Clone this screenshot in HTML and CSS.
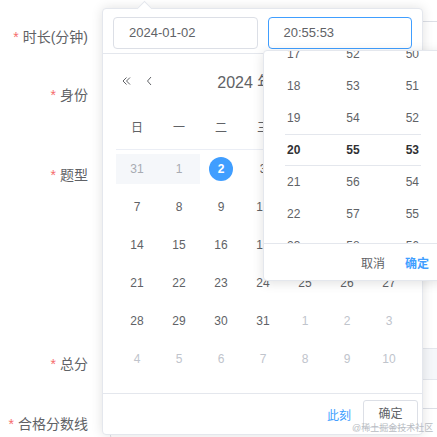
FILE: index.html
```html
<!DOCTYPE html>
<html lang="zh-CN">
<head>
<meta charset="utf-8">
<title>日期时间选择</title>
<link rel="stylesheet" href="styles.css">
</head>
<body>
<div class="page">
  <form class="form">
    <div class="item item-a">
      <label class="label"><span class="req">*</span>时长(分钟)</label>
      <div class="field"></div>
    </div>
    <div class="item item-b">
      <label class="label"><span class="req">*</span>身份</label>
      <div class="field"></div>
    </div>
    <div class="item item-c">
      <label class="label"><span class="req">*</span>题型</label>
      <div class="field"></div>
    </div>
    <div class="item item-d">
      <label class="label"><span class="req">*</span>总分</label>
      <div class="field field-disabled"></div>
    </div>
    <div class="item item-e">
      <label class="label"><span class="req">*</span>合格分数线</label>
      <div class="field"></div>
    </div>
  </form>

  <div class="picker">
    <div class="picker-arrow"></div>
    <div class="picker-head">
      <div class="editor">2024-01-02</div>
      <div class="editor editor-focus">20:55:53</div>
    </div>
    <div class="nav">
      <div class="nav-group">
        <span class="nav-btn"><svg viewBox="0 0 12 12" width="12" height="12"><path d="M6.5 2.5 L3 6 L6.5 9.5 M10 2.5 L6.5 6 L10 9.5" fill="none" stroke="#606266" stroke-width="1"/></svg></span>
        <span class="nav-btn"><svg viewBox="0 0 12 12" width="12" height="12"><path d="M8 2 L4.5 6 L8 10" fill="none" stroke="#606266" stroke-width="1"/></svg></span>
      </div>
      <div class="nav-title"><span class="nav-label">2024 年</span><span class="nav-label">1 月</span></div>
      <div class="nav-group">
        <span class="nav-btn"><svg viewBox="0 0 12 12" width="12" height="12"><path d="M4 2 L7.5 6 L4 10" fill="none" stroke="#606266" stroke-width="1"/></svg></span>
        <span class="nav-btn"><svg viewBox="0 0 12 12" width="12" height="12"><path d="M2 2.5 L5.5 6 L2 9.5 M5.5 2.5 L9 6 L5.5 9.5" fill="none" stroke="#606266" stroke-width="1"/></svg></span>
      </div>
    </div>

    <div class="week">
      <span>日</span><span>一</span><span>二</span><span>三</span><span>四</span><span>五</span><span>六</span>
    </div>
    <div class="days">
      <div class="day day-off"><span>31</span></div>
      <div class="day day-off"><span>1</span></div>
      <div class="day"><span class="day-sel">2</span></div>
      <div class="day"><span>3</span></div>
      <div class="day"><span>4</span></div>
      <div class="day"><span>5</span></div>
      <div class="day"><span>6</span></div>

      <div class="day"><span>7</span></div>
      <div class="day"><span>8</span></div>
      <div class="day"><span>9</span></div>
      <div class="day"><span>10</span></div>
      <div class="day"><span>11</span></div>
      <div class="day"><span>12</span></div>
      <div class="day"><span>13</span></div>

      <div class="day"><span>14</span></div>
      <div class="day"><span>15</span></div>
      <div class="day"><span>16</span></div>
      <div class="day"><span>17</span></div>
      <div class="day"><span>18</span></div>
      <div class="day"><span>19</span></div>
      <div class="day"><span>20</span></div>

      <div class="day"><span>21</span></div>
      <div class="day"><span>22</span></div>
      <div class="day"><span>23</span></div>
      <div class="day"><span>24</span></div>
      <div class="day"><span>25</span></div>
      <div class="day"><span>26</span></div>
      <div class="day"><span>27</span></div>

      <div class="day"><span>28</span></div>
      <div class="day"><span>29</span></div>
      <div class="day"><span>30</span></div>
      <div class="day"><span>31</span></div>
      <div class="day day-next"><span>1</span></div>
      <div class="day day-next"><span>2</span></div>
      <div class="day day-next"><span>3</span></div>

      <div class="day day-next"><span>4</span></div>
      <div class="day day-next"><span>5</span></div>
      <div class="day day-next"><span>6</span></div>
      <div class="day day-next"><span>7</span></div>
      <div class="day day-next"><span>8</span></div>
      <div class="day day-next"><span>9</span></div>
      <div class="day day-next"><span>10</span></div>
    </div>

    <div class="picker-foot">
      <span class="link">此刻</span>
      <span class="btn">确定</span>
    </div>

    <div class="time-panel">
      <div class="time-content">
        <div class="time-col">
          <div class="t">17</div><div class="t">18</div><div class="t">19</div><div class="t t-on">20</div><div class="t">21</div><div class="t">22</div><div class="t">23</div>
        </div>
        <div class="time-col">
          <div class="t">52</div><div class="t">53</div><div class="t">54</div><div class="t t-on">55</div><div class="t">56</div><div class="t">57</div><div class="t">58</div>
        </div>
        <div class="time-col">
          <div class="t">50</div><div class="t">51</div><div class="t">52</div><div class="t t-on">53</div><div class="t">54</div><div class="t">55</div><div class="t">56</div>
        </div>
        <div class="time-band"></div>
      </div>
      <div class="time-foot">
        <span class="time-cancel">取消</span>
        <span class="time-ok">确定</span>
      </div>
    </div>
  </div>

  <div class="watermark">@稀土掘金技术社区</div>
</div>
</body>
</html>
```

FILE: styles.css
```css
html, body {
  margin: 0;
  padding: 0;
  width: 437px;
  height: 437px;
  overflow: hidden;
  background: #fff;
}

.page {
  position: relative;
  width: 437px;
  height: 437px;
  overflow: hidden;
  font-family: "Liberation Sans", "Noto Sans CJK SC", sans-serif;
  color: #606266;
}

/* ---------- form behind popup ---------- */
.form {
  padding-top: 21px;
  margin: 0;
}

.item {
  display: flex;
  align-items: center;
  height: 32px;
}

.item-a { margin-bottom: 26px; }
.item-b { margin-bottom: 48px; }
.item-c { margin-bottom: 157px; }
.item-d { margin-bottom: 28px; }

.label {
  width: 88px;
  flex: none;
  text-align: right;
  font-size: 14px;
  line-height: 32px;
  color: #606266;
  white-space: nowrap;
}

.req {
  color: #f56c6c;
  margin-right: 4px;
}

.field {
  margin-left: 22px;
  width: 420px;
  flex: none;
  height: 32px;
  box-sizing: border-box;
  border: 1px solid #dcdfe6;
  border-radius: 4px;
}

.field-disabled {
  background: #f5f7fa;
  border-color: #e4e7ed;
}

/* ---------- date picker popup ---------- */
.picker {
  position: absolute;
  left: 102px;
  top: 8px;
  width: 321px;
  box-sizing: border-box;
  background: #fff;
  border: 1px solid #e4e7ed;
  border-radius: 4px;
  box-shadow: 0 0 12px rgba(0, 0, 0, 0.12);
}

.picker-arrow {
  position: absolute;
  left: 36px;
  top: -6px;
  width: 10px;
  height: 10px;
  background: #fff;
  border-left: 1px solid #e4e7ed;
  border-top: 1px solid #e4e7ed;
  transform: rotate(45deg);
}

.picker-head {
  display: flex;
  gap: 10px;
  padding: 8px 10px 4px 10px;
  border-bottom: 1px solid #e4e7ed;
}

.editor {
  flex: 1;
  height: 32px;
  box-sizing: border-box;
  border: 1px solid #dcdfe6;
  border-radius: 4px;
  padding: 0 15px;
  font-size: 13px;
  line-height: 30px;
  color: #606266;
}

.editor-focus {
  border-color: #409eff;
}

.nav {
  display: flex;
  align-items: center;
  height: 30px;
  margin-top: 12px;
  padding: 0 16px 0 17px;
}

.nav-group {
  display: flex;
  gap: 11px;
  width: 35px;
}

.nav-btn {
  display: flex;
  width: 12px;
  height: 12px;
}

.nav-title {
  flex: 1;
  text-align: center;
  font-size: 16px;
  color: #606266;
  white-space: nowrap;
}

.nav-label {
  padding: 0 3px;
}

.week {
  display: grid;
  grid-template-columns: repeat(7, 42px);
  margin: 15px 0 0 13px;
  width: 294px;
  height: 38px;
  border-bottom: 1px solid #ebeef5;
  font-size: 12px;
  line-height: 34px;
  text-align: center;
  color: #606266;
}

.days {
  display: grid;
  grid-template-columns: repeat(7, 42px);
  grid-auto-rows: 38px;
  margin-left: 13px;
  width: 294px;
}

.day {
  display: flex;
  align-items: center;
  justify-content: center;
  margin: 4px 0;
  font-size: 12px;
  color: #606266;
}

.day-off {
  background: #f5f7fa;
  color: #a8abb2;
}

.day-next {
  color: #c0c4cc;
}

.day-sel {
  display: flex;
  align-items: center;
  justify-content: center;
  width: 24px;
  height: 24px;
  border-radius: 50%;
  background: #409eff;
  color: #fff;
  font-weight: bold;
}

.picker-foot {
  display: flex;
  align-items: center;
  justify-content: flex-end;
  gap: 12px;
  margin-top: 15px;
  padding: 6px 4px 6px 12px;
  border-top: 1px solid #e4e7ed;
}

.link {
  font-size: 12px;
  color: #409eff;
}

.btn {
  width: 55px;
  height: 28px;
  box-sizing: border-box;
  border: 1px solid #dcdfe6;
  border-radius: 3px;
  font-size: 12px;
  line-height: 26px;
  text-align: center;
  color: #606266;
  background: #fff;
}

/* ---------- time panel ---------- */
.time-panel {
  position: absolute;
  left: 160px;
  top: 41px;
  width: 180px;
  box-sizing: border-box;
  background: #fff;
  border: 1px solid #e4e7ed;
  border-radius: 4px;
  box-shadow: 0 2px 12px rgba(0, 0, 0, 0.12);
  z-index: 2;
}

.time-content {
  position: relative;
  display: flex;
  height: 192px;
  overflow: hidden;
}

.time-col {
  flex: 1;
  margin-top: -13px;
}

.t {
  height: 32px;
  line-height: 32px;
  text-align: center;
  font-size: 12px;
  color: #606266;
}

.t-on {
  color: #303133;
  font-weight: bold;
}

.time-band {
  position: absolute;
  left: 12%;
  right: 12%;
  top: 83px;
  height: 32px;
  box-sizing: border-box;
  border-top: 1px solid #e4e7ed;
  border-bottom: 1px solid #e4e7ed;
  pointer-events: none;
}

.time-foot {
  display: flex;
  justify-content: flex-end;
  align-items: center;
  gap: 20px;
  height: 36px;
  padding-right: 13px;
  border-top: 1px solid #e4e7ed;
  font-size: 12px;
}

.time-cancel {
  color: #606266;
}

.time-ok {
  color: #409eff;
  font-weight: bold;
}

.watermark {
  position: absolute;
  left: 352px;
  top: 422px;
  font-size: 9px;
  line-height: 12px;
  color: #b8bcc2;
  white-space: nowrap;
  z-index: 3;
}
```
